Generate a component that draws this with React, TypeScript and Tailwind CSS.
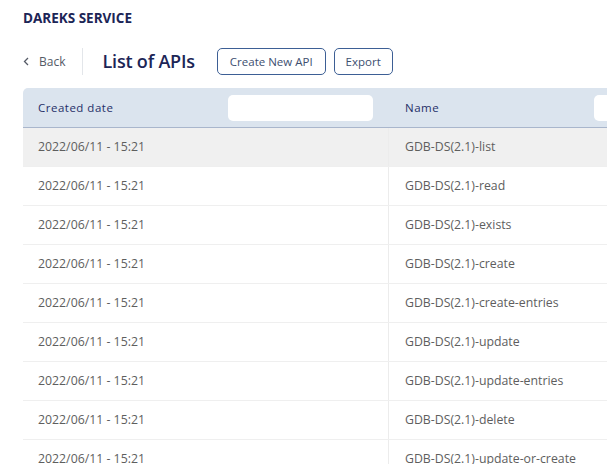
import React from 'react';

const rows = [
  'GDB-DS(2.1)-list',
  'GDB-DS(2.1)-read',
  'GDB-DS(2.1)-exists',
  'GDB-DS(2.1)-create',
  'GDB-DS(2.1)-create-entries',
  'GDB-DS(2.1)-update',
  'GDB-DS(2.1)-update-entries',
  'GDB-DS(2.1)-delete',
  'GDB-DS(2.1)-update-or-create',
  'GDB-DS(2.1)-delete-entries',
];

export default function App() {
  return (
    <div className="w-[607px] h-[464px] overflow-hidden bg-white font-['Open_Sans',sans-serif]">
      <div className="pl-[23px]">
        {/* Header */}
        <h1 className="pt-[10px] h-[28px] text-[13.5px] font-bold text-[#1c2556] leading-[16px]">DAREKS SERVICE</h1>

        <div className="flex items-center h-[60px] pt-[7px]">
          <button className="flex items-center gap-[9px] text-[12px] text-[#555a66]">
            <svg width="7" height="9" viewBox="0 0 7 9" fill="none" stroke="#555a66" strokeWidth="1.3">
              <polyline points="5,1 1.5,4.5 5,8" />
            </svg>
            <span>Back</span>
          </button>
          <div className="w-px h-[27px] bg-[#e3e6ea] ml-[17px]" />
          <h2 className="ml-[19px] text-[18px] font-semibold text-[#1c2556] tracking-[-0.2px]">List of APIs</h2>
          <button className="ml-[22px] h-[27px] px-[12px] rounded-[5px] border border-[#3d5f95] text-[11.5px] text-[#3d4f70]">Create New API</button>
          <button className="ml-[8px] h-[27px] px-[11px] rounded-[5px] border border-[#3d5f95] text-[11.5px] text-[#3d4f70]">Export</button>
        </div>

        {/* Table */}
        <div className="w-[800px]">
          <div className="flex h-[40px] bg-[#dbe4ee] rounded-tl-[5px] border-b border-[#a9b6cc]">
            <div className="w-[366px] flex items-center pl-[15px]">
              <span className="w-[190px] text-[11.5px] text-[#263068] tracking-[0.5px]">Created date</span>
              <div className="w-[145px] h-[26px] bg-white rounded-[5px]" />
            </div>
            <div className="w-[366px] flex items-center pl-[16px]">
              <span className="w-[189px] text-[11.5px] text-[#263068] tracking-[0.5px]">Name</span>
              <div className="w-[145px] h-[26px] bg-white rounded-[5px]" />
            </div>
          </div>
          {rows.map((name, i) => (
            <div key={name} className={`flex h-[39px] border-b border-[#efefef] ${i === 0 ? 'bg-[#f0f0f0]' : 'bg-white'}`}>
              <div className="w-[366px] flex items-center pl-[15px] text-[12.3px] text-[#5e5e5e] border-r border-[#ececec]">2022/06/11 - 15:21</div>
              <div className="flex-1 flex items-center pl-[16px] text-[12.3px] text-[#5e5e5e]">{name}</div>
            </div>
          ))}
        </div>
      </div>
    </div>
  );
}
